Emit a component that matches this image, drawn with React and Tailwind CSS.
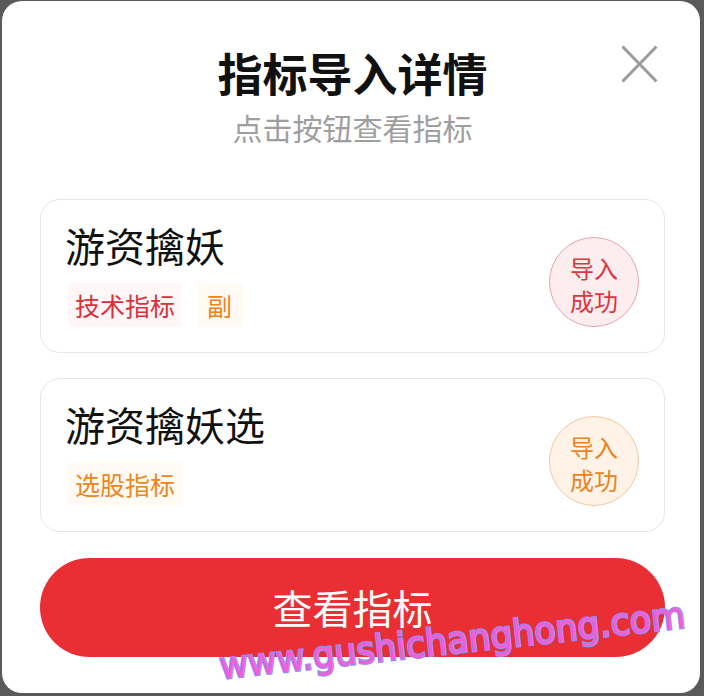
import React from 'react';

const cjk = "font-['Noto_Sans_CJK_SC','Noto_Sans',sans-serif]";

const indicators = [
  {
    name: '游资擒妖',
    tags: [
      { label: '技术指标', tone: 'red' },
      { label: '副', tone: 'orange' },
    ],
    tone: 'red',
  },
  {
    name: '游资擒妖选',
    tags: [{ label: '选股指标', tone: 'orange' }],
    tone: 'orange',
  },
];

const tagStyles = {
  red: 'bg-[#fef6f7] text-[#dc2f3a]',
  orange: 'bg-[#fffaf3] text-[#ee8420]',
};

const badgeStyles = {
  red: 'bg-[#fdedef] border-[#e5a4ae] text-[#df333e]',
  orange: 'bg-[#fef3e6] border-[#f1c89f] text-[#ec8320]',
};

function IndicatorCard({ item }) {
  return (
    <div className="h-[154px] rounded-[20px] border border-[#e6e6e6] bg-white pl-[24px] pr-[25px] pt-[21px] pb-[25px] flex items-end justify-between">
      <div className="flex flex-col">
        <div className="text-[40px] leading-[48px] text-[#111]">{item.name}</div>
        <div className="mt-[14px] ml-[3px] flex gap-[16px]">
          {item.tags.map((t) => (
            <span
              key={t.label}
              className={`h-[44px] text-[25px] leading-[44px] rounded-[4px] ${t.label.length === 1 ? 'pl-[9px] pr-[11px]' : 'px-[7px]'} ${tagStyles[t.tone]}`}
            >
              {t.label}
            </span>
          ))}
        </div>
      </div>
      <div
        className={`w-[90px] h-[90px] rounded-full border flex flex-col items-center justify-center pt-[3px] text-[24px] leading-[33px] ${badgeStyles[item.tone]}`}
      >
        <span>导入</span>
        <span>成功</span>
      </div>
    </div>
  );
}

export default function App() {
  return (
    <div className={`relative h-[696px] w-[704px] bg-[#5a5a5a] pt-px pl-[2px] pr-[4px] pb-[3px] ${cjk}`}>
      {/* Modal */}
      <div className="relative h-full bg-white rounded-[20px] pl-[38px] pr-[35px] pt-[46px]">
        <button className="absolute top-[44px] right-[42px] w-[37px] h-[38px]" title="关闭">
          <svg viewBox="0 0 37 38" className="w-full h-full">
            <path d="M1.5 1.5 L35.5 36.5 M35.5 1.5 L1.5 36.5" stroke="#9c9c9c" strokeWidth="3" fill="none" />
          </svg>
        </button>

        <h1 className="text-center text-[45px] leading-[52px] font-bold text-[#111]">指标导入详情</h1>
        <p className="mt-[8px] text-center text-[30px] leading-[40px] text-[#9e9e9e]">点击按钮查看指标</p>

        <div className="mt-[52px] flex flex-col gap-[25px]">
          {indicators.map((item) => (
            <IndicatorCard key={item.name} item={item} />
          ))}
        </div>

        <button className="mt-[26px] w-full h-[99px] rounded-full bg-[#e92f33] text-white text-[40px] leading-[99px]">
          查看指标
        </button>
      </div>

      {/* Watermark */}
      <svg className="absolute inset-0 pointer-events-none" width="704" height="696" viewBox="0 0 704 696">
        <text
          x="221"
          y="679"
          transform="rotate(-6.3 221 679)"
          textLength="468"
          lengthAdjust="spacingAndGlyphs"
          fontFamily="DejaVu Sans, sans-serif"
          fontSize="37"
          fill="#f35fd3"
          stroke="#948cff"
          strokeWidth="2.5"
          paintOrder="stroke"
        >
          www.gushichanghong.com
        </text>
      </svg>
    </div>
  );
}
